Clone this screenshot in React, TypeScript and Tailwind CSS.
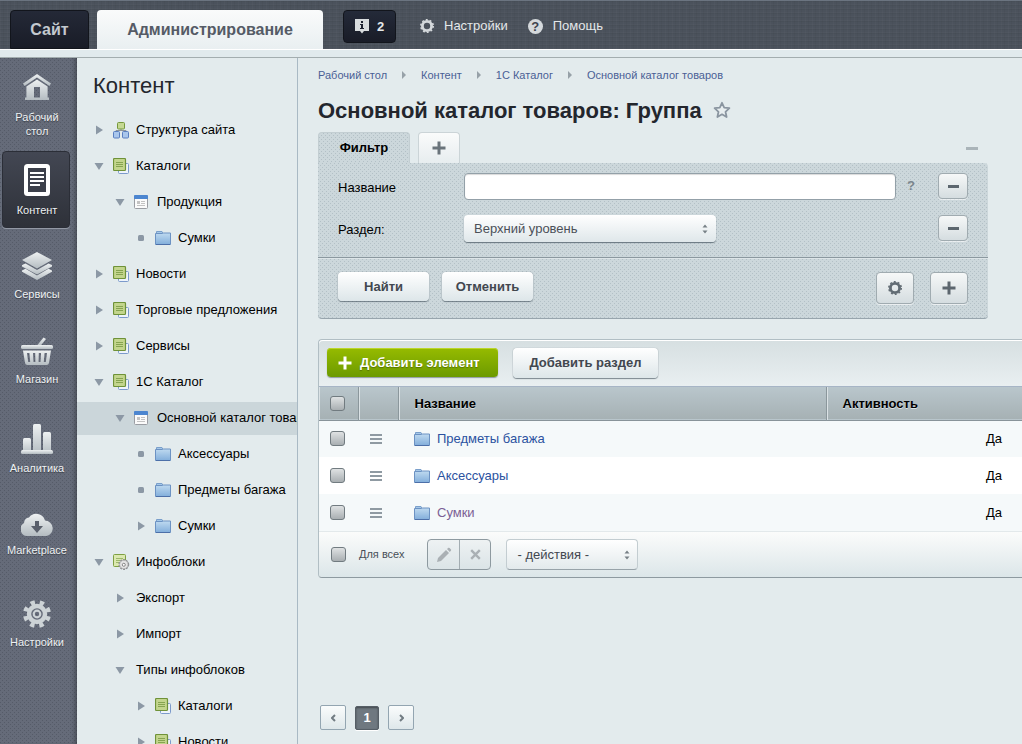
import type { ComponentType, ReactNode } from 'react'
import clsx from 'clsx'

const dots =
  'bg-[conic-gradient(at_1px_1px,transparent_75%,#b3c0c6_0),conic-gradient(at_1px_1px,transparent_75%,#b3c0c6_0)] bg-[length:4px_4px] [background-position:0_0,2px_2px]'

const darkDots =
  'bg-[conic-gradient(at_1px_1px,transparent_75%,#555b68_0),conic-gradient(at_1px_1px,transparent_75%,#555b68_0)] bg-[length:4px_4px] [background-position:0_0,2px_2px]'

/* ---------- icons ---------- */

const MetalGradient = ({ id }: { id: string }) => (
  <linearGradient id={id} x1="0" y1="0" x2="0" y2="1">
    <stop offset="0" stopColor="#eef1f2" />
    <stop offset="1" stopColor="#b4bcc1" />
  </linearGradient>
)

const HomeIcon = () => (
  <svg width="30" height="29" viewBox="0 0 30 29">
    <MetalGradient id="m-home" />
    <g fill="url(#m-home)">
      <path d="M15 0 L29 9.6 L27.4 12 L15 3.6 L2.6 12 L1 9.6 Z" />
      <path
        d="M15 5.4 L25.6 12.6 V23.6 H27 V26 H3 V23.6 H4.4 V12.6 Z M12 13 V23.6 H18 V13 Z"
        fillRule="evenodd"
      />
    </g>
  </svg>
)

const DocIcon = () => (
  <svg width="26" height="32" viewBox="0 0 26 32">
    <rect width="26" height="32" rx="3.5" fill="#fff" />
    <rect x="4" y="4" width="18" height="24" fill="#3c404b" />
    <path d="M6 9H20M6 13H20M6 17H20M6 21H16" stroke="#fff" strokeWidth="2" />
  </svg>
)

const LayersIcon = () => (
  <svg width="32" height="28" viewBox="0 0 32 28">
    <MetalGradient id="m-layers" />
    <g fill="url(#m-layers)">
      <path d="M16 0 L31 8 L16 16.5 L1 8 Z" />
      <path d="M1 13 L4.5 11.4 L16 18 L27.5 11.4 L31 13 L31 14.4 L16 22.4 L1 14.4 Z" />
      <path d="M1 18.4 L4.5 16.8 L16 23.4 L27.5 16.8 L31 18.4 L31 19.8 L16 28 L1 19.8 Z" />
    </g>
  </svg>
)

const BasketIcon = () => (
  <svg width="32" height="28" viewBox="0 0 32 28">
    <MetalGradient id="m-basket" />
    <g fill="url(#m-basket)">
      <path d="M22.5 0.4 L25 2 L19.4 9 H15.6 Z" />
      <rect y="8" width="32" height="4" rx="1.5" />
      <path
        d="M2 13.4 H30 L28 26 Q27.6 28 25.6 28 H6.4 Q4.4 28 4 26 Z M6 16 L7.2 25 H9.2 L8.4 16 Z M12 16 L12.5 25 H14.4 L14.2 16 Z M17.8 16 L17.6 25 H19.5 L20 16 Z M23.6 16 L22.8 25 H24.8 L26 16 Z"
        fillRule="evenodd"
      />
    </g>
  </svg>
)

const ChartIcon = () => (
  <svg width="32" height="30" viewBox="0 0 32 30">
    <MetalGradient id="m-chart" />
    <g fill="url(#m-chart)">
      <rect x="2" y="14" width="8" height="16" rx="1.5" />
      <rect x="12" width="8" height="30" rx="1.5" />
      <rect x="22" y="8" width="8" height="22" rx="1.5" />
      <rect y="26" width="32" height="4" rx="1.5" />
    </g>
  </svg>
)

const CloudIcon = () => (
  <svg width="32" height="23" viewBox="0 0 32 23">
    <MetalGradient id="m-cloud" />
    <path
      d="M7 23 A7 7 0 0 1 3 10 A6 6 0 0 1 8 4.6 A9 9 0 0 1 24 7.6 A8 7.8 0 0 1 25.5 23 Z"
      fill="url(#m-cloud)"
    />
    <path d="M14 8 H18 V13 H22 L16 20 L10 13 H14 Z" fill="#5a606c" />
  </svg>
)

const GearIcon = () => (
  <svg width="28" height="28" viewBox="0 0 28 28">
    <g fill="none" stroke="#cdd3d6">
      <circle cx="14" cy="14" r="8" strokeWidth="4.4" />
      <circle cx="14" cy="14" r="11.5" strokeWidth="5" strokeDasharray="4.2 4.832" strokeDashoffset="-2.4" />
      <circle cx="14" cy="14" r="3.3" strokeWidth="2.2" />
    </g>
  </svg>
)

const SmallGear = ({ className }: { className: string }) => (
  <svg width="14" height="14" viewBox="0 0 14 14" fill="none" stroke="currentColor" className={className}>
    <circle cx="7" cy="7" r="4.6" strokeWidth="2.8" />
    <circle cx="7" cy="7" r="6.2" strokeWidth="1.6" strokeDasharray="1.9 1.995" />
  </svg>
)

const InfoIcon = () => (
  <svg width="14" height="15" viewBox="0 0 14 15">
    <path d="M0 0H14V12H9L7 14.5L5 12H0Z" fill="#d9dddf" />
    <path d="M6 2H8V4H6ZM5 5H8V9H9V10H5V9H6V6H5Z" fill="#1d2230" />
  </svg>
)

const PlusIcon = ({ className }: { className: string }) => (
  <svg width="14" height="14" viewBox="0 0 14 14" className={className}>
    <path d="M5.5 0.5H8.5V5.5H13.5V8.5H8.5V13.5H5.5V8.5H0.5V5.5H5.5Z" fill="currentColor" />
  </svg>
)

const StarIcon = () => (
  <svg width="18" height="18" viewBox="0 0 18 18">
    <path
      d="M9 1.8 L11.2 6.7 L16.4 7.2 L12.5 10.8 L13.6 16 L9 13.3 L4.4 16 L5.5 10.8 L1.6 7.2 L6.8 6.7 Z"
      fill="#e8eef0"
      stroke="#8a95a0"
      strokeWidth="1.8"
      strokeLinejoin="round"
    />
  </svg>
)

const FolderIcon = () => (
  <svg width="16" height="16" viewBox="0 0 16 16">
    <linearGradient id="folder" x1="0" y1="0" x2="0" y2="1">
      <stop offset="0" stopColor="#bfdaf0" />
      <stop offset="1" stopColor="#82aedb" />
    </linearGradient>
    <path d="M1.5 1.5H7L8 3.5H14.5V6H1.5Z" fill="#a5c8e8" stroke="#7a9fcb" />
    <path d="M0.5 3.5H7.5L8.5 3H15.5V14.5H0.5Z" fill="url(#folder)" stroke="#6c92c3" strokeLinejoin="round" />
    <path d="M1 14.5H15" stroke="#4c6fa8" />
  </svg>
)

const BlockIcon = () => (
  <svg width="17" height="17" viewBox="0 0 17 17">
    <rect x="5.5" y="5.5" width="10" height="10" rx="1" fill="#eef4fb" stroke="#7c9acb" />
    <rect x="0.5" y="0.5" width="12" height="12" rx="1" fill="#c3d58d" stroke="#6f9238" strokeWidth="1.2" />
    <path d="M3 4.5H10M3 6.5H10M3 8.5H10" stroke="#86a450" />
  </svg>
)

const BlockGearIcon = () => (
  <svg width="17" height="17" viewBox="0 0 17 17">
    <rect x="0.5" y="0.5" width="12" height="12" rx="1" fill="#dbe8b0" stroke="#7fa043" />
    <path d="M3 4.5H10M3 6.5H7M3 8.5H6" stroke="#9db96b" />
    <circle cx="10.8" cy="10.5" r="4.6" fill="#e3e3e3" stroke="#8a8c8f" strokeWidth="1.6" strokeDasharray="2 0.9" />
    <circle cx="10.8" cy="10.5" r="4.2" fill="#e3e3e3" stroke="#a5a5a5" strokeWidth="0.7" />
    <circle cx="10.8" cy="10.8" r="1.5" fill="#fff" stroke="#858585" />
  </svg>
)

const PageIcon = () => (
  <svg width="14" height="14" viewBox="0 0 14 14">
    <rect x="0.5" y="0.5" width="13" height="13" rx="1" fill="#fbfbfb" stroke="#9a9da3" />
    <path d="M0 1Q0 0 1 0H13Q14 0 14 1V4H0Z" fill="#4c86d0" />
    <path d="M3 6H6V9H3Z" fill="#c3c3c3" />
    <path d="M7 6.5H11M7 8.5H11M3 10.5H11" stroke="#c3c3c3" />
  </svg>
)

const StructureIcon = () => (
  <svg width="16" height="17" viewBox="0 0 16 17">
    <path d="M3 11V8.5H13V11M8 6V8.5" stroke="#8d9499" fill="none" />
    <rect x="4.5" y="0.5" width="7" height="6.5" rx="1" fill="#c5d893" stroke="#76993c" />
    <rect x="0.5" y="9.5" width="6" height="6.5" rx="1" fill="#a9c6ec" stroke="#5a7fc0" />
    <rect x="9.5" y="9.5" width="6" height="6.5" rx="1" fill="#a9c6ec" stroke="#5a7fc0" />
  </svg>
)

const PencilIcon = () => (
  <svg width="16" height="16" viewBox="0 0 16 16" fill="#aab0b4">
    <path d="M1 15 L2 11 L10 3 L13 6 L5 14 Z" />
    <path d="M11 2 L12.4 0.8 Q13 0.5 13.6 1 L15 2.5 Q15.4 3 15 3.6 L13.8 5 Z" />
  </svg>
)

const CrossIcon = () => (
  <svg width="11" height="11" viewBox="0 0 11 11">
    <path d="M1.2 1.2L9.8 9.8M9.8 1.2L1.2 9.8" stroke="#aab0b4" strokeWidth="2.4" />
  </svg>
)

const SortArrows = () => (
  <svg
    width="6"
    height="10"
    viewBox="0 0 6 10"
    fill="#778086"
    className="absolute right-2 top-1/2 -translate-y-1/2 pointer-events-none"
  >
    <path d="M0.5 3.5L3 0.5L5.5 3.5ZM0.5 6.5L3 9.5L5.5 6.5Z" />
  </svg>
)

/* ---------- header ---------- */

const Header = () => (
  <header className="shrink-0">
    <div className="h-[49px] border-t border-[#6b7480] bg-[#4b525c] bg-[repeating-linear-gradient(90deg,rgba(255,255,255,0.02)_0_1px,transparent_1px_3px,rgba(0,0,0,0.03)_3px_4px,transparent_4px_7px),repeating-linear-gradient(0deg,rgba(255,255,255,0.02)_0_1px,transparent_1px_3px,rgba(0,0,0,0.04)_3px_4px)] flex items-start pt-[9px] pl-2.5">
      <a
        href="#site"
        className="w-[79px] h-[39px] rounded-t border border-[#12151c] bg-linear-to-b from-[#242937] to-[#191c27] flex items-center justify-center text-base font-bold text-[#c3c9cf]"
      >
        Сайт
      </a>
      <a
        href="#admin"
        className="ml-2 w-[226px] h-[39px] rounded-t bg-linear-to-b from-[#fafbfb] to-[#e9eff1] flex items-center justify-center text-base font-bold text-[#555b66]"
      >
        Администрирование
      </a>
      <button className="ml-5 w-[53px] h-[33px] rounded border border-[#12151c] bg-linear-to-b from-[#242a39] to-[#191c27] flex items-center justify-center gap-2 text-[13px] font-bold text-[#e4e8ea]">
        <InfoIcon />2
      </button>
      <button className="ml-6 h-8 flex items-center gap-2.5 text-[13px] text-[#e4e8ea]">
        <SmallGear className="text-[#d5d9dc]" />
        Настройки
      </button>
      <button className="ml-5 h-8 flex items-center gap-2.5 text-[13px] text-[#e4e8ea]">
        <span className="size-[15px] rounded-full bg-[#d5d9dc] text-[#3e444e] font-bold leading-[15px] text-center">
          ?
        </span>
        Помощь
      </button>
    </div>
    <div className="h-[9px] bg-[#e1eaed] border-t border-t-white border-b border-b-[#a3adaf]" />
  </header>
)

/* ---------- main menu ---------- */

type MenuItem = {
  label: ReactNode
  icon: ComponentType
  height: string
  active?: boolean
}

const menu: MenuItem[] = [
  { label: <>Рабочий<br />стол</>, icon: HomeIcon, height: 'h-[90px]' },
  { label: 'Контент', icon: DocIcon, height: 'h-[77px] mt-[3px]', active: true },
  { label: 'Сервисы', icon: LayersIcon, height: 'h-[83px]' },
  { label: 'Магазин', icon: BasketIcon, height: 'h-[85px]' },
  { label: 'Аналитика', icon: ChartIcon, height: 'h-[89px]' },
  { label: 'Marketplace', icon: CloudIcon, height: 'h-[82px]' },
  { label: 'Настройки', icon: GearIcon, height: 'h-[92px]' },
]

const MainMenu = () => (
  <nav
    className={clsx(
      'w-[77px] shrink-0 px-0.5 pr-[7px] flex flex-col bg-[#656b79] shadow-[inset_-4px_0_4px_-2px_rgba(0,0,0,0.3)]',
      darkDots,
    )}
  >
    {menu.map(({ label, icon: Icon, height, active }, index) => (
      <a
        key={index}
        href="#menu"
        className={clsx(
          'shrink-0 flex flex-col items-center justify-end gap-[7px] pb-2.5 pl-0.5 text-[11px] leading-[14px] text-center text-[#eef1f3] [text-shadow:0_1px_1px_rgba(0,0,0,0.4)]',
          height,
          active &&
            'rounded border border-[#2b2e37] bg-linear-to-b from-[#434753] to-[#2e3139] shadow-[0_1px_0_#9298a4]',
        )}
      >
        <Icon />
        <span>{label}</span>
      </a>
    ))}
  </nav>
)

/* ---------- tree ---------- */

type Node = {
  label: string
  depth: number
  marker: 'closed' | 'open' | 'leaf'
  icon?: ComponentType
  active?: boolean
}

const tree: Node[] = [
  { label: 'Структура сайта', depth: 0, marker: 'closed', icon: StructureIcon },
  { label: 'Каталоги', depth: 0, marker: 'open', icon: BlockIcon },
  { label: 'Продукция', depth: 1, marker: 'open', icon: PageIcon },
  { label: 'Сумки', depth: 2, marker: 'leaf', icon: FolderIcon },
  { label: 'Новости', depth: 0, marker: 'closed', icon: BlockIcon },
  { label: 'Торговые предложения', depth: 0, marker: 'closed', icon: BlockIcon },
  { label: 'Сервисы', depth: 0, marker: 'closed', icon: BlockIcon },
  { label: '1С Каталог', depth: 0, marker: 'open', icon: BlockIcon },
  { label: 'Основной каталог товаров', depth: 1, marker: 'open', icon: PageIcon, active: true },
  { label: 'Аксессуары', depth: 2, marker: 'leaf', icon: FolderIcon },
  { label: 'Предметы багажа', depth: 2, marker: 'leaf', icon: FolderIcon },
  { label: 'Сумки', depth: 2, marker: 'closed', icon: FolderIcon },
  { label: 'Инфоблоки', depth: 0, marker: 'open', icon: BlockGearIcon },
  { label: 'Экспорт', depth: 1, marker: 'closed' },
  { label: 'Импорт', depth: 1, marker: 'closed' },
  { label: 'Типы инфоблоков', depth: 1, marker: 'open' },
  { label: 'Каталоги', depth: 2, marker: 'closed', icon: BlockIcon },
  { label: 'Новости', depth: 2, marker: 'closed', icon: BlockIcon },
]

const indents = ['pl-4', 'pl-[37px]', 'pl-[58px]']

const Marker = ({ type }: { type: Node['marker'] }) => (
  <svg width="12" height="12" viewBox="0 0 12 12" fill="#8c98a5" className="shrink-0">
    {type === 'closed' && <path d="M3 1.5L10 6L3 10.5Z" />}
    {type === 'open' && <path d="M1.5 3H10.5L6 10Z" />}
    {type === 'leaf' && <rect x="3" y="3" width="6" height="6" rx="1.5" />}
  </svg>
)

const Tree = () => (
  <aside className="w-[221px] shrink-0 border-r border-[#a9b9c4] overflow-hidden">
    <h2 className="pt-3.5 pl-4 h-[54px] text-[22px] leading-7 text-[#23262d]">Контент</h2>
    <ul>
      {tree.map(({ label, depth, marker, icon: Icon, active }, index) => (
        <li key={index} className="h-9 flex items-center">
          <a
            href="#node"
            className={clsx(
              'w-full h-[33px] flex items-center text-[13px] text-black whitespace-nowrap',
              indents[depth],
              active && 'bg-[#cbd6da]',
            )}
          >
            <Marker type={marker} />
            {Icon ? (
              <span className="w-6 ml-2 -mr-px shrink-0">
                <Icon />
              </span>
            ) : (
              <span className="w-2.5 shrink-0" />
            )}
            {label}
          </a>
        </li>
      ))}
    </ul>
  </aside>
)

/* ---------- content ---------- */

const crumbs = ['Рабочий стол', 'Контент', '1С Каталог', 'Основной каталог товаров']

const Breadcrumbs = () => (
  <nav className="flex items-center h-[34px] text-[11px] text-[#4a5f95]">
    {crumbs.map((crumb, index) => (
      <span key={crumb} className="flex items-center">
        {index > 0 && (
          <svg width="6" height="8" viewBox="0 0 6 8" fill="#97a1a8" className="mx-3.5">
            <path d="M1 0L5 4L1 8Z" />
          </svg>
        )}
        <a href="#crumb">{crumb}</a>
      </span>
    ))}
  </nav>
)

const lightButton =
  'rounded bg-linear-to-b from-white to-[#dde6e9] shadow-[0_1px_1px_rgba(60,75,85,0.6),0_0_1px_rgba(60,75,85,0.5)] text-[13px] font-bold text-[#42474f]'

const squareButton =
  'rounded border border-[#a0abb0] bg-linear-to-b from-[#f6f8f8] to-[#d5dde0] shadow-[0_1px_0_rgba(255,255,255,0.6)] flex items-center justify-center text-[#5c666e] shrink-0'

const RemoveField = ({ label }: { label: string }) => (
  <button aria-label={label} className={clsx(squareButton, 'w-[30px] h-[26px]')}>
    <span className="w-[11px] h-[3px] bg-[#5c666e]" />
  </button>
)

const Filter = () => (
  <section className="mr-[34px]">
    <div className="flex items-end h-[31px]">
      <button
        className={clsx(
          'w-[92px] h-[31px] rounded-t bg-[#ccd7db] border-t border-x border-b-0 border-[#c3ced2] text-[13px] font-bold text-black',
          dots,
        )}
      >
        Фильтр
      </button>
      <button
        aria-label="Добавить фильтр"
        className="ml-2 w-[42px] h-[31px] rounded-t border border-b-0 border-[#cbd4d7] bg-linear-to-b from-[#fafbfb] to-[#e7edef] flex items-center justify-center"
      >
        <PlusIcon className="text-[#6a747b]" />
      </button>
      <button aria-label="Свернуть" className="ml-auto mr-2.5 mb-[13px] w-3 h-[3px] bg-[#aab4b9]" />
    </div>
    <div className={clsx('rounded-b rounded-tr bg-[#ccd7db] border-b border-[#98a5ad]', dots)}>
      <div className="px-5 pt-2.5 pb-3 flex flex-col gap-3">
        <div className="flex items-start">
          <label htmlFor="name" className="w-[126px] shrink-0 leading-[30px] text-[13px]">
            Название
          </label>
          <input
            id="name"
            className="flex-1 min-w-0 h-[27px] rounded border border-[#93a0a8] bg-white px-2 text-[13px] shadow-[inset_0_1px_1px_rgba(0,0,0,0.15)]"
          />
          <span className="w-[42px] pr-3 text-center leading-[26px] text-[13px] font-bold text-[#7a858c]">?</span>
          <RemoveField label="Убрать название" />
        </div>
        <div className="flex items-start justify-between">
          <div className="flex">
            <label htmlFor="section" className="w-[126px] shrink-0 leading-[30px] text-[13px]">
              Раздел:
            </label>
            <div className="relative w-[252px] h-[27px]">
              <select
                id="section"
                className="w-full h-[27px] pl-2.5 rounded-sm appearance-none bg-linear-to-b from-white to-[#dfe7ea] shadow-[0_1px_1px_rgba(60,75,85,0.7)] text-[13px] text-[#4b5058]"
              >
                <option>Верхний уровень</option>
              </select>
              <SortArrows />
            </div>
          </div>
          <RemoveField label="Убрать раздел" />
        </div>
      </div>
      <div className="flex px-5 pt-3.5 pb-3.5 gap-[13px] border-t border-[#8b989f] shadow-[inset_0_1px_0_#dde5e8]">
        <button className={clsx(lightButton, 'w-[91px] h-[29px]')}>Найти</button>
        <button className={clsx(lightButton, 'w-[91px] h-[29px]')}>Отменить</button>
        <button aria-label="Настроить фильтр" className={clsx(squareButton, 'ml-auto w-[38px] h-8')}>
          <SmallGear className="text-[#626c74]" />
        </button>
        <button aria-label="Добавить условие" className={clsx(squareButton, 'ml-[3px] w-[38px] h-8')}>
          <PlusIcon className="text-[#5c666e]" />
        </button>
      </div>
    </div>
  </section>
)

const Check = ({ label, id }: { label?: string; id?: string }) => (
  <input
    type="checkbox"
    id={id}
    aria-label={label}
    className="block appearance-none size-[15px] rounded-[3px] border border-[#717b80] bg-linear-to-b from-[#dfe2e3] to-[#a9afb2] checked:bg-[#5f6b75]"
  />
)

const rows = [
  { name: 'Предметы багажа', visited: false },
  { name: 'Аксессуары', visited: false },
  { name: 'Сумки', visited: true },
]

const headCell =
  'border-r border-[#8b979c] shadow-[inset_1px_0_0_#dbe2e5] text-left font-bold [text-shadow:0_1px_0_#dbe2e5]'

const Table = () => (
  <table className="w-full table-fixed text-[13px]">
    <colgroup>
      <col className="w-[39px]" />
      <col className="w-10" />
      <col />
      <col className="w-[196px]" />
    </colgroup>
    <thead>
      <tr className="h-[33px] bg-linear-to-b from-[#b9c6cc] to-[#a6b1b4] border-b border-[#889399] text-black">
        <th className={clsx(headCell, 'pl-[11px]')}>
          <Check label="Выбрать все" />
        </th>
        <th className={headCell} />
        <th className={clsx(headCell, 'pl-4')}>Название</th>
        <th className="pl-4 text-left font-bold shadow-[inset_1px_0_0_#dbe2e5] [text-shadow:0_1px_0_#dbe2e5]">
          Активность
        </th>
      </tr>
    </thead>
    <tbody>
      {rows.map(({ name, visited }) => (
        <tr key={name} className="h-[37px] odd:bg-[#f5f9fa] even:bg-white">
          <td className="pl-[11px]">
            <Check label={name} />
          </td>
          <td className="pl-3">
            <button aria-label="Меню" className="block">
              <svg width="12" height="10" viewBox="0 0 12 10">
                <path d="M0 1H12M0 5H12M0 9H12" stroke="#8f9aa2" strokeWidth="2" />
              </svg>
            </button>
          </td>
          <td className="pl-4">
            <a
              href="#section"
              className={clsx('flex items-center gap-[7px]', visited ? 'text-[#7b5f95]' : 'text-[#2b52a0]')}
            >
              <FolderIcon />
              {name}
            </a>
          </td>
          <td className="pr-5 text-right text-black">Да</td>
        </tr>
      ))}
    </tbody>
  </table>
)

const List = () => (
  <section className="mt-5 border-l border-y border-[#b1bec4] border-b-[#8e9aa0] rounded-l">
    <div className="flex items-start h-[47px] pt-2 pl-2 gap-[15px] rounded-tl border-b border-[#a7b5c6] bg-linear-to-b from-[#d6dfe1] to-[#e9eff1] shadow-[inset_0_1px_0_#fff]">
      <button className="w-[171px] h-[29px] pl-[11px] rounded bg-linear-to-b from-[#96bb00] to-[#6c9a00] shadow-[inset_0_1px_0_#bcd62a,0_1px_1px_rgba(60,75,85,0.5)] flex items-center gap-2 text-[13px] font-bold text-white [text-shadow:0_1px_1px_rgba(0,0,0,0.3)]">
        <PlusIcon className="text-white" />
        Добавить элемент
      </button>
      <button className={clsx(lightButton, 'w-[145px] h-[30px]')}>Добавить раздел</button>
    </div>
    <Table />
    <div className="flex items-center h-[46px] pl-3 rounded-bl border-t border-[#e3e9eb] bg-linear-to-b from-[#fbfcfb] to-[#dce6e9]">
      <Check id="for-all" />
      <label htmlFor="for-all" className="ml-[13px] text-[11px] text-[#484e57]">
        Для всех
      </label>
      <div className="ml-[23px] w-16 h-[31px] flex rounded border border-[#8e9aa0] bg-linear-to-b from-[#eef2f3] to-[#dbe4e7]">
        <button aria-label="Изменить" disabled className="flex-1 flex items-center justify-center border-r border-[#a3adb2]">
          <PencilIcon />
        </button>
        <button aria-label="Удалить" disabled className="flex-1 flex items-center justify-center">
          <CrossIcon />
        </button>
      </div>
      <div className="relative ml-[15px] w-[132px]">
        <select
          aria-label="Действия"
          className="block w-full h-[31px] pl-2.5 appearance-none rounded border border-[#c3cdd1] border-b-[#98a3a9] bg-linear-to-b from-white to-[#e3eaec] text-[13px] text-[#42474f]"
        >
          <option>- действия -</option>
        </select>
        <SortArrows />
      </div>
    </div>
  </section>
)

const pageButton =
  'w-[26px] h-[25px] rounded-xs border border-[#93a5b1] bg-linear-to-b from-[#fafcfc] to-[#dee7ea] flex items-center justify-center'

const Pager = () => (
  <nav className="mt-[127px] ml-0.5 flex items-center gap-[9px]">
    <button aria-label="Назад" className={pageButton}>
      <svg width="5" height="8" viewBox="0 0 5 8" fill="none">
        <path d="M4 1L1 4L4 7" stroke="#727c83" strokeWidth="2" />
      </svg>
    </button>
    <button className="w-6 h-6 rounded-xs border border-[#565e66] bg-[#6f7880] shadow-[0_1px_0_#fff,inset_0_1px_2px_rgba(0,0,0,0.4)] text-[13px] font-bold text-white leading-none">
      1
    </button>
    <button aria-label="Вперёд" className={pageButton}>
      <svg width="5" height="8" viewBox="0 0 5 8" fill="none">
        <path d="M1 1L4 4L1 7" stroke="#727c83" strokeWidth="2" />
      </svg>
    </button>
  </nav>
)

export default function App() {
  return (
    <div className="h-screen overflow-hidden flex flex-col bg-[#e3ebed] font-['Liberation_Sans',Arial,sans-serif] text-black">
      <Header />
      <div className="flex-1 min-h-0 flex">
        <MainMenu />
        <Tree />
        <main className="flex-1 min-w-0 pl-5">
          <Breadcrumbs />
          <div className="flex items-center gap-[11px] h-9 mb-1">
            <h1 className="text-[22px] font-bold text-[#23262d]">Основной каталог товаров: Группа</h1>
            <button aria-label="В избранное">
              <StarIcon />
            </button>
          </div>
          <Filter />
          <List />
          <Pager />
        </main>
      </div>
    </div>
  )
}
